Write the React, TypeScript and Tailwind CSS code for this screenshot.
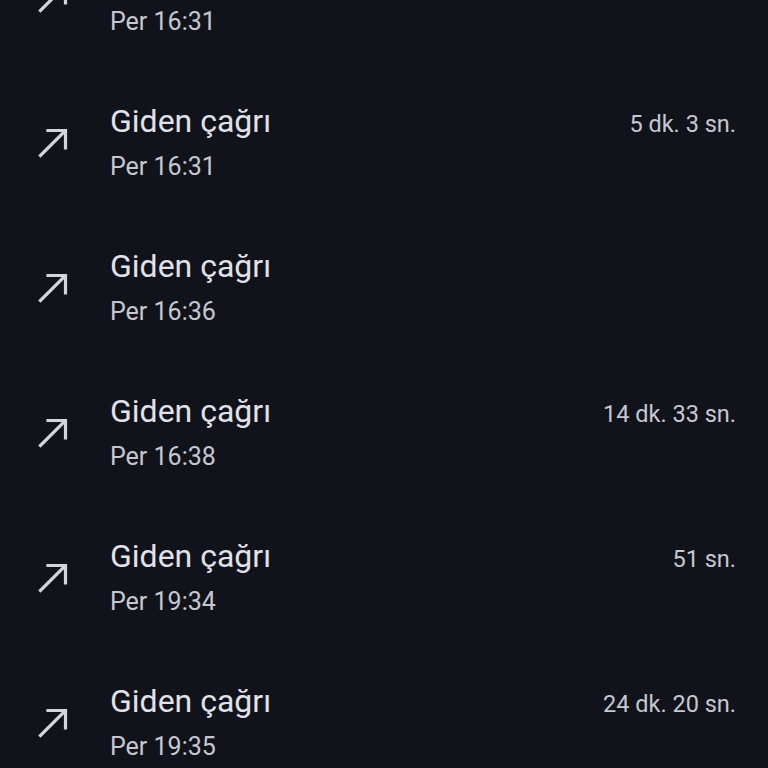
import React from "react";

const rows = [
  { time: "Per 16:31", dur: "" },
  { time: "Per 16:31", dur: "5 dk. 3 sn." },
  { time: "Per 16:36", dur: "" },
  { time: "Per 16:38", dur: "14 dk. 33 sn." },
  { time: "Per 19:34", dur: "51 sn." },
  { time: "Per 19:35", dur: "24 dk. 20 sn." },
];

function OutArrow() {
  return (
    <svg width="32" height="32" viewBox="0 0 32 32" fill="none" className="shrink-0">
      <path d="M3.5 29.5 L28 5" stroke="#d4d5dc" strokeWidth="3.2" strokeLinecap="square" />
      <path d="M11 4.5 H28.5 V22" stroke="#d4d5dc" strokeWidth="3.2" strokeLinecap="square" strokeLinejoin="miter" />
    </svg>
  );
}

export default function App() {
  return (
    <div
      className="w-[768px] h-[768px] overflow-hidden bg-[#11131a]"
      style={{ fontFamily: "Roboto, 'Open Sans', sans-serif" }}
    >
      <div className="-mt-[76px] flex flex-col">
        {rows.map((r, i) => (
          <div key={i} className="h-[145px] flex items-center pl-[37px] pr-[32px]">
            <OutArrow />
            <div className="ml-[41px] flex-1 flex flex-col">
              <div className="flex items-baseline justify-between">
                <span className="text-[32px] leading-[40px] text-[#e1e1e8]">Giden çağrı</span>
                <span className="text-[23.5px] leading-[30px] text-[#c6c7d0]">{r.dur}</span>
              </div>
              <span className="text-[25px] leading-[32px] text-[#c6c7d0] mt-[10px]">{r.time}</span>
            </div>
          </div>
        ))}
      </div>
    </div>
  );
}
